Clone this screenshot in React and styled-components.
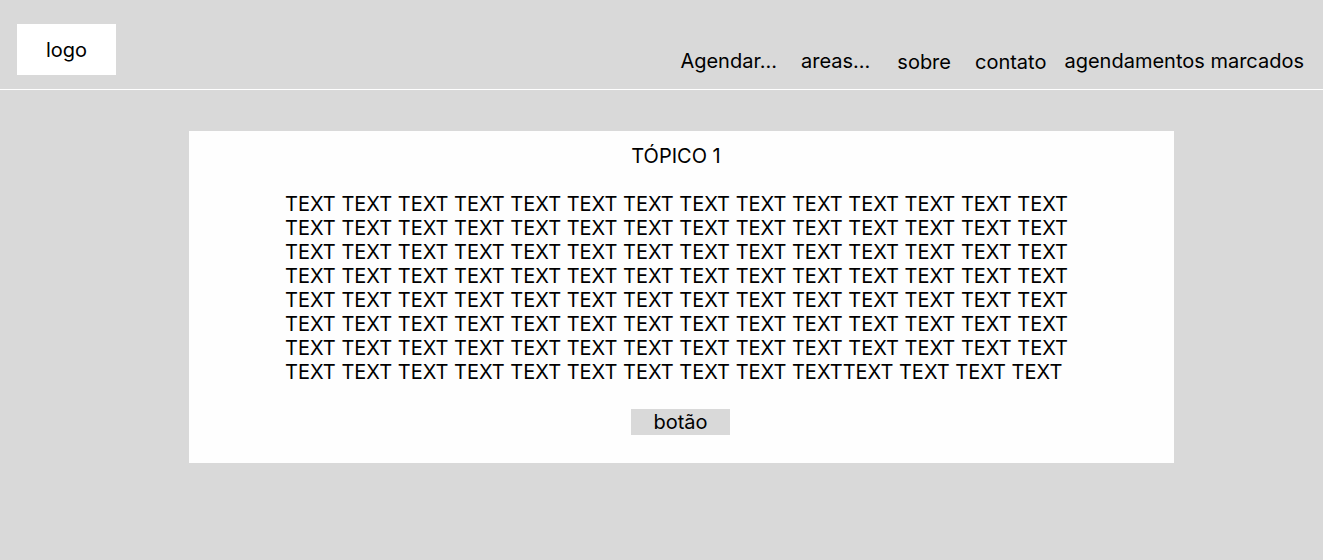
import styled, { createGlobalStyle } from 'styled-components';

const GlobalStyle = createGlobalStyle`
  html, body {
    margin: 0;
    padding: 0;
    background: #d9d9d9;
    font-family: Inter, "Noto Sans", sans-serif;
    color: #000;
  }
`;

const Page = styled.div`
  min-height: 560px;
  background: #d9d9d9;
`;

const Header = styled.header`
  height: 89px;
  display: flex;
  align-items: flex-start;
  justify-content: space-between;
  padding: 0 19px 0 17px;
  border-bottom: 1px solid #ffffff;
  box-sizing: content-box;
`;

const Logo = styled.div`
  margin-top: 24px;
  width: 99px;
  height: 51px;
  background: #ffffff;
  display: flex;
  align-items: center;
  justify-content: center;
  font-size: 20px;
`;

const Nav = styled.nav`
  display: flex;
  align-items: center;
  margin-top: 48px;
`;

const NavItem = styled.a`
  font-size: 20px;
  color: #000;
  text-decoration: none;
  margin-left: ${(p) => p.$gap}px;
  margin-top: ${(p) => p.$drop || 0}px;
`;

const Main = styled.main`
  display: flex;
  justify-content: flex-start;
  padding: 41px 0 0 189px;
`;

const Card = styled.section`
  width: 985px;
  height: 332px;
  background: #fefefe;
  display: flex;
  flex-direction: column;
  align-items: center;
  box-sizing: border-box;
  padding-top: 13px;
`;

const Title = styled.h2`
  margin: 0 11px 24px 0;
  font-size: 20px;
  font-weight: 400;
  line-height: 24px;
`;

const Body = styled.div`
  margin-left: -10px;
  font-size: 20px;
  line-height: 24px;
`;

const Line = styled.div`
  white-space: pre;
`;

const Button = styled.button`
  margin: 25px 2px 0 0;
  width: 99px;
  height: 26px;
  border: none;
  background: #d9d9d9;
  font-family: inherit;
  font-size: 20px;
  color: #000;
  padding: 0;
  line-height: 26px;
`;

const full = Array(14).fill('TEXT').join(' ');
const lines = [full, full, full, full, full, full, full,
  'TEXT TEXT TEXT TEXT TEXT TEXT TEXT TEXT TEXT TEXTTEXT TEXT TEXT TEXT'];

const navLinks = [
  { label: 'Agendar...', gap: 0 },
  { label: 'areas...', gap: 24 },
  { label: 'sobre', gap: 27, drop: 2 },
  { label: 'contato', gap: 24, drop: 2 },
  { label: 'agendamentos marcados', gap: 18 },
];

export default function App() {
  return (
    <Page>
      <GlobalStyle />
      <Header>
        <Logo>logo</Logo>
        <Nav>
          {navLinks.map((l) => (
            <NavItem key={l.label} $gap={l.gap} $drop={l.drop}>{l.label}</NavItem>
          ))}
        </Nav>
      </Header>
      <Main>
        <Card>
          <Title>TÓPICO 1</Title>
          <Body>
            {lines.map((t, i) => (
              <Line key={i}>{t}</Line>
            ))}
          </Body>
          <Button>botão</Button>
        </Card>
      </Main>
    </Page>
  );
}
